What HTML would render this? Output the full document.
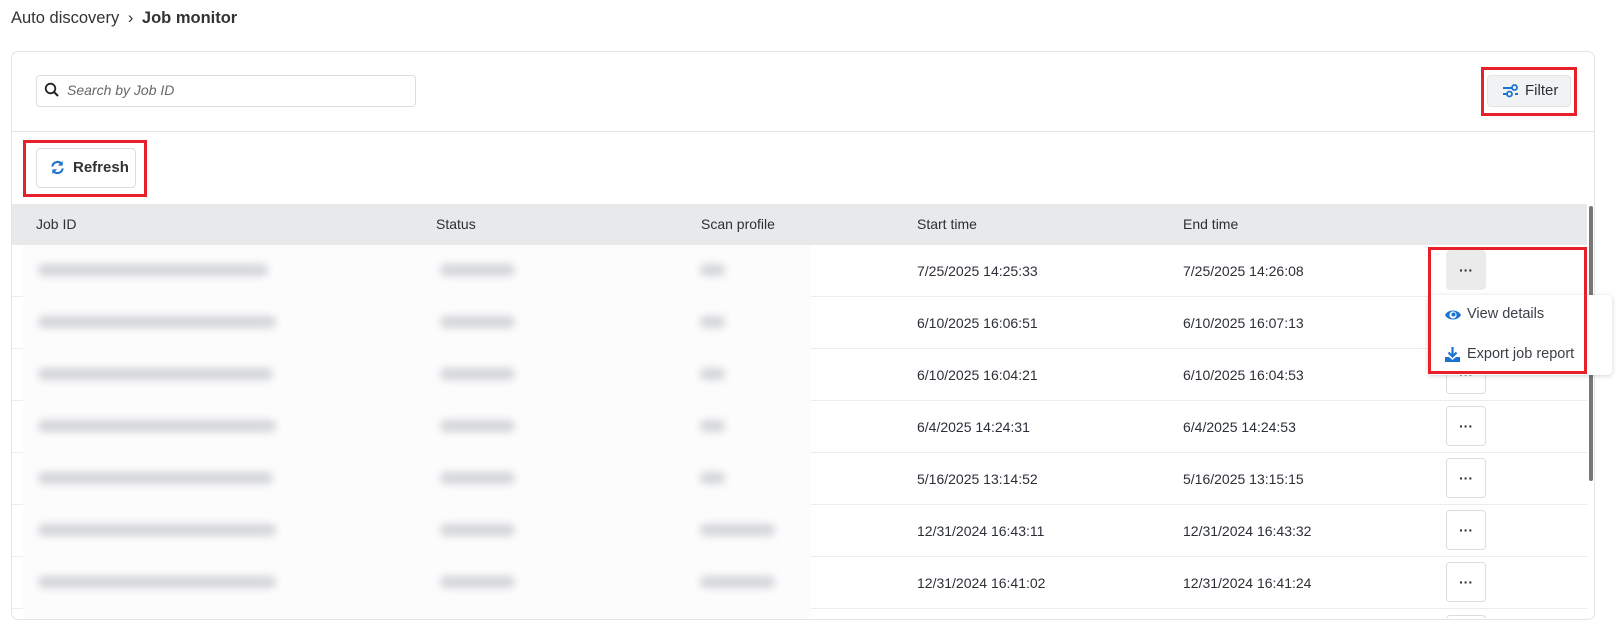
<!DOCTYPE html>
<html><head><meta charset="utf-8"><style>
*{box-sizing:border-box;margin:0;padding:0}
body{width:1616px;height:640px;background:#fff;font-family:"Liberation Sans",sans-serif;color:#2b2f36;position:relative;overflow:hidden;font-size:14px}
.abs{position:absolute}
.card{left:11px;top:51px;width:1584px;height:569px;border:1px solid #e3e4e6;border-radius:7px;overflow:hidden}
.hdr{left:12px;top:204px;width:1575px;height:41px;background:#e8e9eb}
.th{top:216px;font-size:14px;color:#2b2f36}
.row{left:0;width:1575px;height:52px;border-bottom:1px solid #ececee}
.td{font-size:14px;color:#2b2f36}
.blur{background:#d3d5d9;height:12px;border-radius:6px;filter:blur(4px)}
.btn{width:40px;height:40px;border:1px solid #dcdde0;border-radius:4px;background:#fff;display:flex;align-items:center;justify-content:center;font-weight:bold;font-size:14px}
.red{border:3px solid #e8202a}
#clip{position:absolute;left:12px;top:245px;width:1575px;height:373px;overflow:hidden}
</style></head><body>
<div class="abs" style="left:11px;top:9px;font-size:16.5px;color:#333">Auto discovery <span style="margin:0 4px">›</span> <b>Job monitor</b></div>
<div class="abs card"></div>
<div class="abs" style="left:36px;top:75px;width:380px;height:32px;border:1px solid #dcdde0;border-radius:4px"></div>
<svg class="abs" style="left:44px;top:82px" width="16" height="16" viewBox="0 0 16 16"><circle cx="6.5" cy="6.5" r="4.8" fill="none" stroke="#222" stroke-width="1.8"/><path d="M10 10l4 4" stroke="#222" stroke-width="2"/></svg>
<div class="abs" style="left:67px;top:82px;font-style:italic;color:#666;font-size:14px">Search by Job ID</div>
<div class="abs" style="left:1487px;top:75px;width:84px;height:32px;background:#f1f2f4;border:1px solid #e3e4e6;border-radius:4px"></div>
<svg class="abs" style="left:1501px;top:82px" width="18" height="18" viewBox="0 0 18 18"><path d="M2 6h9M2 12h4M14 12h3" stroke="#1a73d1" stroke-width="2" fill="none"/><circle cx="13.5" cy="5.5" r="2.5" fill="none" stroke="#1a73d1" stroke-width="1.8"/><circle cx="8.5" cy="12" r="2.5" fill="none" stroke="#1a73d1" stroke-width="1.8"/></svg>
<div class="abs" style="left:1525px;top:82px;font-size:15px">Filter</div>
<div class="abs red" style="left:1481px;top:67px;width:96px;height:49px"></div>
<div class="abs" style="left:12px;top:131px;width:1583px;height:1px;background:#e3e4e6"></div>
<div class="abs" style="left:36px;top:148px;width:100px;height:40px;border:1px solid #dcdde0;border-radius:4px"></div>
<svg class="abs" style="left:50px;top:160px" width="15" height="15" viewBox="0 0 16 16"><path d="M2.5 7A5.5 5.5 0 0 1 12.5 4.5M13.5 9A5.5 5.5 0 0 1 3.5 11.5" stroke="#1a73d1" stroke-width="2.2" fill="none"/><path d="M13.5 1v5h-5zM2.5 15v-5h5z" fill="#1a73d1"/></svg>
<div class="abs" style="left:73px;top:159px;font-size:15px;font-weight:bold;color:#333">Refresh</div>
<div class="abs red" style="left:23px;top:140px;width:124px;height:57px"></div>
<div class="abs hdr"></div>
<div class="abs th" style="left:36px">Job ID</div>
<div class="abs th" style="left:436px">Status</div>
<div class="abs th" style="left:701px">Scan profile</div>
<div class="abs th" style="left:917px">Start time</div>
<div class="abs th" style="left:1183px">End time</div>

<div id="clip">
<div class="abs row" style="top:0"></div>
<div class="abs row" style="top:52px"></div>
<div class="abs row" style="top:104px"></div>
<div class="abs row" style="top:156px"></div>
<div class="abs row" style="top:208px"></div>
<div class="abs row" style="top:260px"></div>
<div class="abs row" style="top:312px"></div>
<div class="abs" style="left:11px;top:0;width:788px;height:373px;background:#fcfcfc"></div>
<div class="abs btn" style="left:1434px;top:5px;background:#ebebeb;border-color:#ebebeb">···</div>
<div class="abs btn" style="left:1434px;top:109px">···</div>
<div class="abs btn" style="left:1434px;top:161px">···</div>
<div class="abs btn" style="left:1434px;top:213px">···</div>
<div class="abs btn" style="left:1434px;top:265px">···</div>
<div class="abs btn" style="left:1434px;top:317px">···</div>
<div class="abs btn" style="left:1434px;top:370px">···</div>
</div>

<div class="abs blur" style="left:38px;top:264px;width:230px"></div><div class="abs blur" style="left:440px;top:264px;width:75px"></div><div class="abs blur" style="left:700px;top:264px;width:25px"></div>
<div class="abs blur" style="left:38px;top:316px;width:238px"></div><div class="abs blur" style="left:440px;top:316px;width:75px"></div><div class="abs blur" style="left:700px;top:316px;width:25px"></div>
<div class="abs blur" style="left:38px;top:368px;width:235px"></div><div class="abs blur" style="left:440px;top:368px;width:75px"></div><div class="abs blur" style="left:700px;top:368px;width:25px"></div>
<div class="abs blur" style="left:38px;top:420px;width:238px"></div><div class="abs blur" style="left:440px;top:420px;width:75px"></div><div class="abs blur" style="left:700px;top:420px;width:25px"></div>
<div class="abs blur" style="left:38px;top:472px;width:235px"></div><div class="abs blur" style="left:440px;top:472px;width:75px"></div><div class="abs blur" style="left:700px;top:472px;width:25px"></div>
<div class="abs blur" style="left:38px;top:524px;width:238px"></div><div class="abs blur" style="left:440px;top:524px;width:75px"></div><div class="abs blur" style="left:700px;top:524px;width:75px"></div>
<div class="abs blur" style="left:38px;top:576px;width:238px"></div><div class="abs blur" style="left:440px;top:576px;width:75px"></div><div class="abs blur" style="left:700px;top:576px;width:75px"></div>

<div class="abs td" style="left:917px;top:263px">7/25/2025 14:25:33</div><div class="abs td" style="left:1183px;top:263px">7/25/2025 14:26:08</div>
<div class="abs td" style="left:917px;top:315px">6/10/2025 16:06:51</div><div class="abs td" style="left:1183px;top:315px">6/10/2025 16:07:13</div>
<div class="abs td" style="left:917px;top:367px">6/10/2025 16:04:21</div><div class="abs td" style="left:1183px;top:367px">6/10/2025 16:04:53</div>
<div class="abs td" style="left:917px;top:419px">6/4/2025 14:24:31</div><div class="abs td" style="left:1183px;top:419px">6/4/2025 14:24:53</div>
<div class="abs td" style="left:917px;top:471px">5/16/2025 13:14:52</div><div class="abs td" style="left:1183px;top:471px">5/16/2025 13:15:15</div>
<div class="abs td" style="left:917px;top:523px">12/31/2024 16:43:11</div><div class="abs td" style="left:1183px;top:523px">12/31/2024 16:43:32</div>
<div class="abs td" style="left:917px;top:575px">12/31/2024 16:41:02</div><div class="abs td" style="left:1183px;top:575px">12/31/2024 16:41:24</div>

<div class="abs" style="left:1589px;top:206px;width:4px;height:275px;background:#777;border-radius:2px"></div>

<div class="abs" style="left:1428px;top:295px;width:184px;height:80px;background:#fff;border-radius:4px;box-shadow:0 1px 5px rgba(0,0,0,.18)"></div>
<svg class="abs" style="left:1444px;top:307px" width="18" height="16" viewBox="0 0 18 16"><path d="M1 8C4 2 14 2 17 8C14 14 4 14 1 8Z" fill="#1a73d1"/><circle cx="9" cy="8" r="3.6" fill="#fff"/><circle cx="9.5" cy="7.5" r="2" fill="#1a73d1"/></svg>
<div class="abs" style="left:1467px;top:306px;font-size:14.5px;color:#3a3f47">View details</div>
<svg class="abs" style="left:1444px;top:346px" width="17" height="17" viewBox="0 0 17 17"><path d="M8.5 1v9M4.5 6.5l4 4 4-4" stroke="#1a73d1" stroke-width="2.2" fill="none"/><path d="M1 11h4l3.5 3 3.5-3h4v5H1z" fill="#1a73d1"/></svg>
<div class="abs" style="left:1467px;top:346px;font-size:14.5px;color:#3a3f47">Export job report</div>
<div class="abs red" style="left:1428px;top:247px;width:159px;height:127px"></div>
</body></html>
